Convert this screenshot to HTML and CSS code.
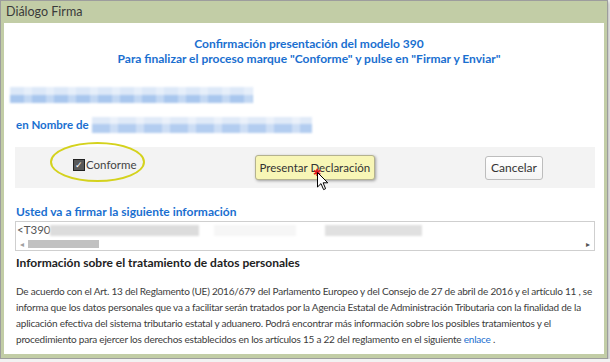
FILE: index.html
```html
<!DOCTYPE html>
<html>
<head>
  <title>Diálogo Firma</title>
  <meta charset="UTF-8">
  <link rel="stylesheet" href="styles.css">
</head>
<body>
  <div class="dialog">
    <div class="dialog-title">Diálogo Firma</div>

    <div class="dialog-body">
      <!-- cabecera -->
      <div class="intro">
        <p>Confirmación presentación del modelo 390</p>
        <p>Para finalizar el proceso marque "Conforme" y pulse en "Firmar y Enviar"</p>
      </div>

      <div class="blur blur-name"></div>
      <div class="on-behalf">en Nombre de <span class="blur blur-nif"></span></div>

      <!-- acciones -->
      <div class="actions">
        <span class="ring"></span>
        <label class="agree"><span class="check">✓</span>Conforme</label>
        <button class="btn btn-send">Presentar Declaración</button>
        <button class="btn btn-cancel">Cancelar</button>
        <span class="click-mark">✱</span>
        <svg class="cursor" width="12" height="19" viewBox="0 0 12 19">
          <path d="M0.5 0.5 L0.5 15 L4 11.6 L6.6 17.6 L8.6 16.7 L6.1 10.8 L10.8 10.8 Z" fill="#fff" stroke="#000" stroke-width="1" stroke-linejoin="round"/>
        </svg>
      </div>

      <div class="section-label">Usted va a firmar la siguiente información</div>
      <div class="sign-box">
        <div class="sign-text">&lt;T390<span class="blur blur-data"></span></div>
        <div class="hscroll">
          <span class="arrow">&#9666;</span>
          <span class="thumb"></span>
          <span class="arrow arrow-right">&#9656;</span>
        </div>
      </div>

      <h3>Información sobre el tratamiento de datos personales</h3>
      <p class="legal">De acuerdo con el Art. 13 del Reglamento (UE) 2016/679 del Parlamento Europeo y del Consejo de 27 de abril de 2016 y el artículo 11 , se informa que los datos personales que va a facilitar serán tratados por la Agencia Estatal de Administración Tributaria con la finalidad de la aplicación efectiva del sistema tributario estatal y aduanero. Podrá encontrar más información sobre los posibles tratamientos y el procedimiento para ejercer los derechos establecidos en los artículos 15 a 22 del reglamento en el siguiente <a href="#">enlace</a> .</p>
    </div>
  </div>
</body>
</html>
```

FILE: styles.css
```css
body {
  margin: 0;
  background: #f2f2f2;
  font-family: 'Lato', 'Open Sans', sans-serif;
  color: #333;
}

.dialog {
  width: 600px;
  border: 1px solid #9d9d9d;
  background: #c2cda6;
  padding: 0 3px 4px 3px;
  box-shadow: 1px 2px 3px rgba(0, 0, 0, 0.25);
}

.dialog-title {
  height: 22px;
  line-height: 22px;
  padding-left: 2px;
  font-size: 12.5px;
  color: #3a3a3a;
}

.dialog-body {
  background: #fff;
  padding: 13px 6px 7px 12px;
}

.intro {
  text-align: center;
  color: #1a6fd0;
  font-weight: bold;
  font-size: 12px;
  padding-left: 4px;
}

.intro p {
  margin: 0;
  line-height: 15px;
}

.blur {
  display: inline-block;
  filter: blur(1px);
}

.blur-name {
  display: block;
  margin: 21px 0 0 -6px;
  width: 243px;
  height: 16px;
  background:
    repeating-linear-gradient(90deg, rgba(255,255,255,0) 0 14px, rgba(255,255,255,0.3) 14px 22px),
    linear-gradient(#dce8f8 0 50%, #a9c7ee 50% 100%);
}

.on-behalf {
  margin-top: 14px;
  height: 16px;
  line-height: 16px;
  font-size: 11.5px;
  font-weight: bold;
  color: #1a6fd0;
  display: flex;
  align-items: center;
}

.blur-nif {
  width: 220px;
  height: 16px;
  margin-left: 3px;
  background:
    repeating-linear-gradient(90deg, rgba(255,255,255,0) 0 18px, rgba(255,255,255,0.35) 18px 26px),
    linear-gradient(#e0eaf8 0 45%, #b3cdf0 45% 100%);
}

.actions {
  position: relative;
  margin: 14px 3px 0 -1px;
  height: 41px;
  background: #f3f3f3;
  display: flex;
  align-items: center;
  padding-left: 58px;
}

.ring {
  position: absolute;
  left: 35px;
  top: -5px;
  width: 91px;
  height: 36px;
  border: 2px solid #d4d21d;
  border-radius: 50%;
}

.agree {
  display: flex;
  align-items: center;
  font-size: 11.5px;
  color: #444;
  margin-top: -6px;
}

.check {
  width: 10px;
  height: 10px;
  border: 1px solid #222;
  background: #595959;
  color: #fff;
  font-size: 9px;
  line-height: 10px;
  text-align: center;
  margin-right: 1px;
}

.btn {
  font-family: 'Lato', 'Open Sans', sans-serif;
  font-size: 11.5px;
  color: #333;
  border-radius: 3px;
  padding: 0 4px;
  height: 25px;
  white-space: nowrap;
}

.btn-send {
  margin-left: 118px;
  background: #f8f6b6;
  border: 1px solid #b4b28f;
  box-shadow: 1px 1px 3px rgba(0, 0, 0, 0.35);
}

.btn-cancel {
  margin-left: 110px;
  height: 24px;
  font-size: 12px;
  padding: 0 5px;
  background: linear-gradient(#fff, #f4f4f4);
  border: 1px solid #bdbdbd;
}

.click-mark {
  position: absolute;
  left: 298px;
  top: 20px;
  color: #e0161b;
  font-size: 10px;
  line-height: 10px;
}

.cursor {
  position: absolute;
  left: 302px;
  top: 25px;
}

.section-label {
  margin-top: 17px;
  font-size: 12px;
  line-height: 14px;
  font-weight: bold;
  color: #1a6fd0;
}

.sign-box {
  margin: 2px 3px 0 -1px;
  border: 1px solid #cfcfcf;
  height: 28px;
  background: #fff;
}

.sign-text {
  height: 16px;
  line-height: 16px;
  font-size: 11.5px;
  color: #555;
  padding-left: 1px;
  display: flex;
  align-items: center;
}

.blur-data {
  width: 372px;
  height: 11px;
  background: linear-gradient(90deg, #dcdcdc 0 40%, #fff 40% 44%, #f6f6f6 44% 66%, #fff 66% 74%, #e0e0e0 74% 100%);
}

.hscroll {
  display: flex;
  align-items: center;
  height: 12px;
  font-size: 8px;
  color: #a0a0a0;
}

.arrow {
  width: 12px;
  text-align: center;
}

.arrow-right {
  margin-left: auto;
  color: #555;
}

.thumb {
  width: 71px;
  height: 8px;
  background: #c1c1c1;
}

h3 {
  margin: 4px 0 0 0;
  font-size: 12px;
  line-height: 15px;
  color: #222;
}

.legal {
  margin: 13px 0 0 0;
  font-size: 10px;
  letter-spacing: -0.22px;
  line-height: 16px;
  color: #3c3c3c;
}

.legal a {
  color: #1a6fd0;
  text-decoration: none;
}
```
